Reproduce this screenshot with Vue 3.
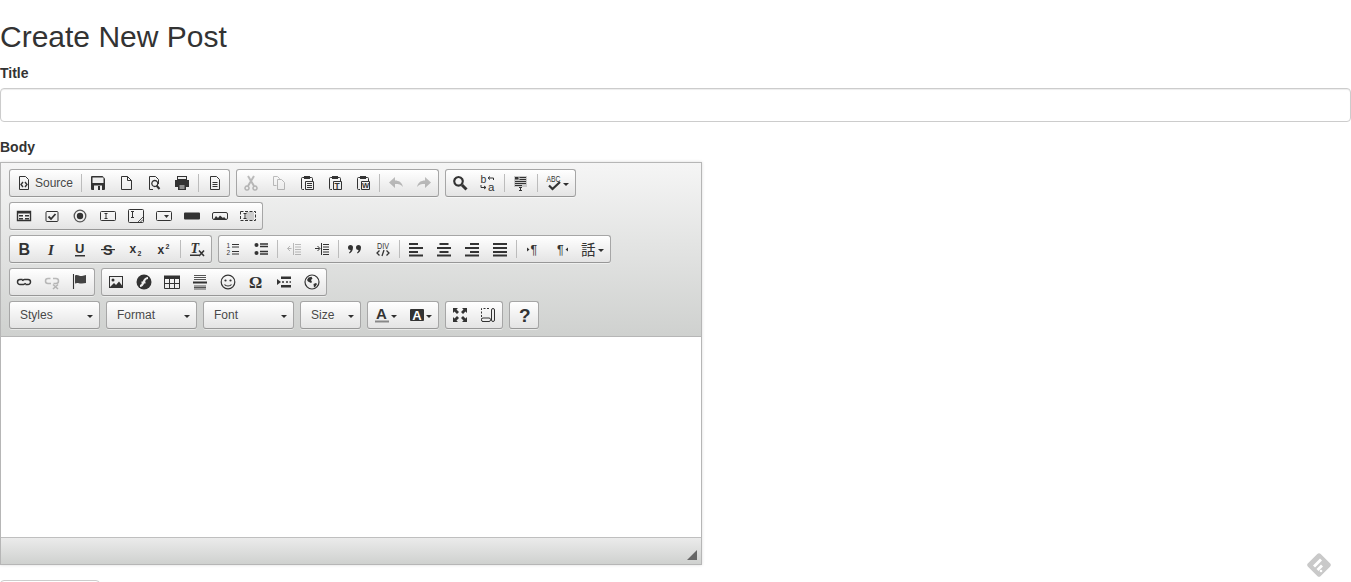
<script setup>
const D = '#333'
const txt = (s, x, y, size, extra = '') =>
  `<text x="${x}" y="${y}" font-size="${size}" font-family="Liberation Sans, sans-serif" fill="${D}" ${extra}>${s}</text>`
const line = (d, w = 1, c = D) => `<path d="${d}" fill="none" stroke="${c}" stroke-width="${w}"/>`
const fill = (d, c = D) => `<path d="${d}" fill="${c}"/>`
const doc = 'M3.500 1.500h6l3 3v10h-9z'
const clip = line('M5 2.500H3.500a1 1 0 0 0-1 1v10a1 1 0 0 0 1 1H5M11 2.500h1.500a1 1 0 0 1 1 1V6') + fill('M5 1h6v3H5z')
const sheet = line('M6.500 6.500h8v8h-8z')

const icons = {
  source: line(doc) + line('M7 7L5 9.500l2 2.500M9 7l2 2.500L9 12', 1.4),
  save: fill('M1.500 1h11L15 3.500V14a1 1 0 0 1-1 1H2a1 1 0 0 1-1-1V2z') + fill('M2.500 2.500h11V8h-11zM4 10.500h8V15H4z', '#eee') + fill('M8 11h2v4H8z'),
  newpage: line('M3.500 1.500h6l4 4v9h-10zM9.500 1.500v4h4'),
  preview: line('M12.500 9V4.500l-3-3h-6v13H7') + line('M8.800 5.500a3 3 0 1 0 .01 0z', 1.3) + line('M10.500 10.500L13.500 14', 2),
  print: fill('M3 1h10v4H3z') + fill('M4 2h8v2H4z', '#eee') + fill('M1 5h14v7h-3V9H4v3H1z') + fill('M4 9h8v6H4z') + fill('M5.500 10.500h5v1h-5zM5.500 12.500h5v1h-5z', '#eee'),
  templates: line('M3.500 1.500h6l3 3v10h-9z') + line('M5.500 7.500h5M5.500 9.500h5M5.500 11.500h5'),
  cut: line('M5 11L11 1M11 11L5 1', 2) + line('M4 11a2 2 0 1 0 .01 0zM12 11a2 2 0 1 0 .01 0z', 1.5),
  copy: line('M5.500 10.500h-3v-9h4l2 2v1') + line('M6.500 4.500h4l3 3v7h-7z'),
  paste: clip + sheet + line('M8 8.500h5M8 10.500h5M8 12.500h5'),
  pastetext: clip + sheet + txt('T', 7.500, 13.500, 8.500, 'font-weight="700"'),
  pasteword: clip + sheet + txt('W', 6.900, 13, 7.500, 'font-weight="700"'),
  undo: fill('M1 7.500L7 2v3.500c4 0 7 2 8 6.500-2-2.500-4-3-8-3v4z'),
  redo: fill('M15 7.500L9 2v3.500c-4 0-7 2-8 6.500 2-2.500 4-3 8-3v4z'),
  find: line('M6.500 2a4.300 4.300 0 1 0 .01 0z', 2.200) + line('M10 10l4.500 4.500', 3),
  replace: txt('b', 0.500, 8, 10.500) + txt('a', 8, 15.500, 11.500) + line('M9 3h4.500v2M8 3l2-1.500M8 3l2 1.500') + line('M1 10v2.500h5M6 12.500l-2-1.500M6 12.500L4 14'),
  selectall: fill('M1 1h13v11H1z', '#c8c8c8') + fill('M2 2h3.500v2.500H2z') + line('M6.500 2.500h6.500M6.500 4.500h6.500M2 6.500h11M2 8.500h11M2 10.500h7', 1.100) + line('M6 12.500h3M7.500 12.500v3M6 15.500h3'),
  spell: txt('ABC', 0.500, 7, 8.500, 'textLength="14" lengthAdjust="spacingAndGlyphs"') + line('M3 10.500l3.500 3.500 7.500-7', 2.200),
  form: line('M1.500 3.500h13v9h-13z', 1.400) + fill('M1.500 3.500h13v2h-13z') + fill('M3 7h4v1.500H3zM9 7h4v1.500H9zM3 10h4v1.500H3zM9 10h4v1.500H9z'),
  checkbox: line('M3 3.500h10a1 1 0 0 1 1 1v8a1 1 0 0 1-1 1H3a1 1 0 0 1-1-1v-8a1 1 0 0 1 1-1z') + line('M4.500 8.500l2.500 2.500 4.500-5', 1.800),
  radio: '<circle cx="8" cy="8" r="5.800" fill="none" stroke="#555" stroke-width="1.300"/><circle cx="8" cy="8" r="3.200" fill="#333"/>',
  textfield: line('M1.500 3.500h13a1 1 0 0 1 1 1v7a1 1 0 0 1-1 1h-13a1 1 0 0 1-1-1v-7a1 1 0 0 1 1-1z') + line('M4.500 5.500h3M6 5.500v5M4.500 10.500h3'),
  textarea: line('M.5 2.500a1 1 0 0 1 1-1h13a1 1 0 0 1 1 1v11a1 1 0 0 1-1 1h-13a1 1 0 0 1-1-1z') + line('M3 3.500h3M4.500 3.500v6M3 9.500h3') + line('M10 14l5-5M12.500 14l2.500-2.500', 1, '#555'),
  select: line('M1.500 3.500h13a1 1 0 0 1 1 1v7a1 1 0 0 1-1 1h-13a1 1 0 0 1-1-1v-7a1 1 0 0 1 1-1z') + fill('M8 7h5l-2.500 3z'),
  button: fill('M1 4.500h14a1 1 0 0 1 1 1v5a1 1 0 0 1-1 1H1a1 1 0 0 1-1-1v-5a1 1 0 0 1 1-1z'),
  imagebutton: line('M2 4.500h12a1.500 1.500 0 0 1 1.500 1.500v4a1.500 1.500 0 0 1-1.500 1.500H2a1.500 1.500 0 0 1-1.500-1.500V6A1.500 1.500 0 0 1 2 4.500z') + fill('M2 11l2-3 2 2 2-2.500 3 2.500 1-1 2 2z'),
  hiddenfield: fill('M6 4h8v8H6z', '#ccc') + '<rect x="0.500" y="3.500" width="15" height="9" fill="none" stroke="#333" stroke-dasharray="3 1.500"/>' + line('M3.500 5.500h3M5 5.500v5M3.500 10.500h3'),
  bold: txt('B', 2.500, 14, 16, 'font-weight="700"'),
  italic: `<text x="4" y="13.500" font-size="15" font-weight="700" font-style="italic" font-family="Liberation Serif, serif" fill="${D}">I</text>`,
  underline: txt('U', 3, 12, 13, 'font-weight="700"') + fill('M3 14h10v1.500H3z'),
  strike: txt('S', 3, 13.500, 14.500, 'font-weight="700"') + fill('M1 8h14v1.200H1z'),
  subscript: txt('x', 1.500, 12, 12, 'font-weight="700"') + txt('2', 9.500, 14.500, 7, 'font-weight="700"'),
  superscript: txt('x', 1.500, 13, 12, 'font-weight="700"') + txt('2', 9.500, 7.500, 7, 'font-weight="700"'),
  removeformat: `<text x="1.500" y="12" font-size="14" font-weight="700" font-style="italic" font-family="Liberation Serif, serif" fill="${D}">T</text>` + fill('M1 13.500h9V15H1z') + line('M10 9.500l5 5.500M15 9.500l-5 5.500', 1.600),
  numberedlist: txt('1', 1.500, 6.500, 6.500) + txt('2', 1.500, 14, 6.500) + line('M7 3.500h7M7 6h7M7 10.500h7M7 13h7'),
  bulletedlist: '<circle cx="3.500" cy="4" r="2" fill="#333"/><circle cx="3.500" cy="12" r="2" fill="#333"/>' + line('M7 3h8M7 5.500h8M7 10.500h8M7 13h8', 1.300),
  outdent: line('M4 5L1.500 7.500 4 10M1.500 7.500h4') + line('M7.500 2v12', 1, '#333') + line('M9 3.500h6M9 6h6M9 8.500h6M9 11h6M9 13.500h6'),
  indent: line('M3.500 5L6 7.500 3.500 10M1 7.500h4.500') + line('M7.500 2v12', 1, '#333') + line('M9 3.500h6M9 6h6M9 8.500h6M9 11h6M9 13.500h6'),
  blockquote: fill('M3.500 4a2.500 2.500 0 0 1 2.500 2.500c0 3-1.500 5-3.500 6l-.5-1c1-.8 1.500-1.500 1.500-2.500a2.500 2.500 0 0 1 0-5zM11.500 4a2.500 2.500 0 0 1 2.500 2.500c0 3-1.500 5-3.500 6l-.5-1c1-.8 1.500-1.500 1.500-2.500a2.500 2.500 0 0 1 0-5z'),
  creatediv: txt('DIV', 2, 7.500, 8.500, 'textLength="12" lengthAdjust="spacingAndGlyphs"') + line('M4.500 9.500L2 12l2.500 2.500M11.500 9.500L14 12l-2.500 2.500M9 9l-2 6', 1.300),
  left: line('M1 3h9M1 7h14M1 11h9M1 14.500h14', 2),
  center: line('M3.500 3h9M1 7h14M3.500 11h9M1 14.500h14', 2),
  right: line('M6 3h9M1 7h14M6 11h9M1 14.500h14', 2),
  justify: line('M1 3h14M1 7h14M1 11h14M1 14.500h14', 2),
  ltr: fill('M2 6.500l2.500 2-2.500 2z') + txt('¶', 5.500, 13, 12.500),
  rtl: fill('M15 6.500l-2.500 2 2.500 2z') + txt('¶', 4, 13, 12.500),
  language: `<text x="0" y="13.500" font-size="14.500" font-family="Noto Sans CJK JP, sans-serif" fill="${D}">話</text>`,
  link: line('M6.500 5.500H4a2.500 2.500 0 0 0 0 5h3.500a2.500 2.500 0 0 0 2-1.500M9.500 10.500H12a2.500 2.500 0 0 0 0-5H8.500a2.500 2.500 0 0 0-2 1.500', 1.500),
  unlink: line('M6.500 4.500H4a2.500 2.500 0 0 0 0 5h3M9.500 9.500H12a2.500 2.500 0 0 0 0-5H9', 1.500) + line('M9 10.500l5 4.500M14 10.500L9 15', 1.500),
  anchor: line('M1.500 0v15', 1.100) + fill('M3 1.500c3-1.500 4 1 7 .5l4-1v8l-4 .5c-3 .5-4-1.500-7 0z', '#444'),
  image: fill('M1 2h14v12H1z') + fill('M2 3h12v10H2z', '#f0f0f0') + '<circle cx="5" cy="6" r="1.500" fill="#333"/>' + fill('M2 13l4-4 2 2 3-3.500 3 4V13z'),
  flash: '<circle cx="8" cy="8" r="7.500" fill="#333"/>' + line('M4 12c3 0 3-3 4-5s2-3 4-3M5.500 8.500h4', 2, '#eee'),
  table: fill('M0 1.500h16V5H0z') + line('M.5 4.500h15v10H.5zM5.500 4.500v10M10.500 4.500v10M.5 9.500h15'),
  horizontalrule: line('M2 1.500h12M2 3.500h12M2 5.500h12M2 12h12M2 13.500h12M2 15h12', 1, '#555') + fill('M1 7.500h14v2H1z'),
  smiley: '<circle cx="8" cy="8" r="6.800" fill="none" stroke="#333" stroke-width="1.200"/><circle cx="5.500" cy="6.500" r="1.100" fill="#333"/><circle cx="10.500" cy="6.500" r="1.100" fill="#333"/>' + line('M4.500 10.500c1.500 2 5.500 2 7 0', 1.200),
  specialchar: `<text x="1" y="14" font-size="16.500" font-weight="700" font-family="Liberation Serif, serif" fill="${D}">Ω</text>`,
  pagebreak: fill('M1 5l4 3-4 3z') + fill('M5 2.500h10v2.500H5zM5 11h10v2.500H5z') + line('M6 8h2M10 8h2M13.500 8h1.500', 1.500),
  iframe: '<circle cx="8" cy="8" r="7" fill="none" stroke="#333" stroke-width="1.200"/>' + fill('M4.500 3.500l3-.8 1 1.800-1.500 1.500 1 2L7 9 4 7.500 3 6zM9.500 10l2.500-1 1 1-1.500 2.500-1.500 1z'),
  textcolor: txt('A', 2, 11.500, 15, 'font-weight="700"') + fill('M1 13.500h14v2H1z', '#888'),
  bgcolor: fill('M2 2h12a1 1 0 0 1 1 1v10a1 1 0 0 1-1 1H2a1 1 0 0 1-1-1V3a1 1 0 0 1 1-1z') + `<text x="3.300" y="12.500" font-size="13" font-weight="700" font-family="Liberation Sans, sans-serif" fill="#fff">A</text>`,
  maximize: fill('M1 1h5L4.500 2.500 7 5 5 7 2.500 4.500 1 6zM15 1v5l-1.500-1.500L11 7 9 5l2.500-2.500L10 1zM1 15v-5l1.500 1.500L5 9l2 2-2.500 2.500L6 15zM15 15h-5l1.500-1.500L9 11l2-2 2.500 2.500L15 10z'),
  showblocks: '<path d="M9 1.500H1.500v13H9" fill="none" stroke="#333" stroke-dasharray="2 1.500"/><rect x="1.500" y="11" width="9" height="3.500" rx="1.500" fill="#eee" stroke="#333"/><rect x="11.500" y="1.500" width="3" height="13" rx="1.500" fill="#eee" stroke="#333"/>',
  about: txt('?', 3, 15, 19, 'font-weight="700"'),
}

const sep = { sep: true }
const b = (icon, opts = {}) => ({ icon, ...opts })

const rows = [
  [
    [b('source', { label: 'Source' }), sep, b('save'), b('newpage'), b('preview'), b('print'), sep, b('templates')],
    [b('cut', { off: true }), b('copy', { off: true }), b('paste'), b('pastetext'), b('pasteword'), sep, b('undo', { off: true }), b('redo', { off: true })],
    [b('find'), b('replace'), sep, b('selectall'), sep, b('spell', { arrow: true })],
  ],
  [
    [b('form'), b('checkbox'), b('radio'), b('textfield'), b('textarea'), b('select'), b('button'), b('imagebutton'), b('hiddenfield')],
  ],
  [
    [b('bold'), b('italic'), b('underline'), b('strike'), b('subscript'), b('superscript'), sep, b('removeformat')],
    [b('numberedlist'), b('bulletedlist'), sep, b('outdent', { off: true }), b('indent'), sep, b('blockquote'), b('creatediv'), sep, b('left'), b('center'), b('right'), b('justify'), sep, b('ltr'), b('rtl'), b('language', { arrow: true })],
  ],
  [
    [b('link'), b('unlink', { off: true }), b('anchor')],
    [b('image'), b('flash'), b('table'), b('horizontalrule'), b('smiley'), b('specialchar'), b('pagebreak'), b('iframe')],
  ],
]

const combos = [
  { name: 'Styles', w: 91 },
  { name: 'Format', w: 91 },
  { name: 'Font', w: 91 },
  { name: 'Size', w: 61 },
]
const lastGroups = [
  [b('textcolor', { arrow: true }), b('bgcolor', { arrow: true })],
  [b('maximize'), b('showblocks')],
  [b('about')],
]
</script>

<template>
  <div class="page">
    <h2>Create New Post</h2>
    <div class="field">
      <label for="title">Title</label>
      <input id="title" type="text" class="control">
    </div>
    <div class="field">
      <label>Body</label>
      <div class="editor">
        <div class="top">
          <div v-for="(row, i) in rows" :key="i" class="row">
            <div v-for="(group, j) in row" :key="j" class="group">
              <template v-for="(item, k) in group" :key="k">
                <span v-if="item.sep" class="sep"></span>
                <a v-else class="btn" :class="{ off: item.off }">
                  <svg class="icon" width="16" height="16" viewBox="0 0 16 16" v-html="icons[item.icon]"></svg>
                  <span v-if="item.label" class="btn-label">{{ item.label }}</span>
                  <span v-if="item.arrow" class="btn-arrow"></span>
                </a>
              </template>
            </div>
          </div>
          <div class="row">
            <a v-for="c in combos" :key="c.name" class="group combo" :style="{ width: c.w + 'px' }">
              <span>{{ c.name }}</span>
              <span class="combo-arrow"></span>
            </a>
            <div v-for="(group, j) in lastGroups" :key="j" class="group">
              <a v-for="item in group" :key="item.icon" class="btn">
                <svg class="icon" width="16" height="16" viewBox="0 0 16 16" v-html="icons[item.icon]"></svg>
                <span v-if="item.arrow" class="btn-arrow"></span>
              </a>
            </div>
          </div>
        </div>
        <div class="content"></div>
        <div class="bottom">
          <span class="resizer"></span>
        </div>
      </div>
    </div>
    <button class="submit">Create Post</button>
    <svg class="float-icon" width="24" height="24" viewBox="0 0 24 24">
      <path d="M10.300 1L1 10.300a2.400 2.400 0 0 0 0 3.400L10.300 23a2.400 2.400 0 0 0 3.400 0L23 13.700a2.400 2.400 0 0 0 0-3.400L13.700 1a2.400 2.400 0 0 0-3.400 0z" fill="#c9c9c9"/>
      <path d="M6 12.500l7-7 2 2-7 7zM9.500 16l4.500-4.500 2 2-4.500 4.500z" fill="#fff"/>
      <circle cx="14" cy="18" r="1.300" fill="#fff"/>
    </svg>
  </div>
</template>

<style>
html, body {
  overflow: hidden;
}
</style>

<style scoped>
.page {
  font-family: "Liberation Sans", Arial, sans-serif;
  font-size: 14px;
  line-height: 20px;
  color: #333;
}

h2 {
  margin: 20px 0 10px;
  font-size: 30px;
  line-height: 33px;
  font-weight: 500;
}

.field {
  margin-bottom: 15px;
}

label {
  display: block;
  margin-bottom: 5px;
  font-weight: 700;
}

.control {
  display: block;
  box-sizing: border-box;
  width: 100%;
  height: 34px;
  padding: 6px 12px;
  border: 1px solid #ccc;
  border-radius: 4px;
  box-shadow: inset 0 1px 1px rgba(0, 0, 0, 0.075);
  background: #fff;
}

.editor {
  position: relative;
  box-sizing: border-box;
  width: 702px;
  border: 1px solid #b6b6b6;
  box-shadow: 0 0 3px rgba(0, 0, 0, 0.15);
}

.top {
  box-sizing: border-box;
  height: 174px;
  padding: 6px 8px 2px;
  border-bottom: 1px solid #b6b6b6;
  background: linear-gradient(#f5f5f5, #cfd1cf);
}

.row {
  display: flex;
  gap: 6px;
  margin-bottom: 5px;
}

.group {
  display: flex;
  align-items: center;
  box-sizing: border-box;
  height: 28px;
  border: 1px solid #a6a6a6;
  border-bottom-color: #979797;
  border-radius: 3px;
  background: linear-gradient(#fff, #e4e4e4);
  box-shadow: 0 1px 0 rgba(255, 255, 255, 0.5);
}

.sep {
  flex: none;
  width: 1px;
  height: 18px;
  margin: 0 2px;
  background: #bcbcbc;
}

.btn {
  display: flex;
  align-items: center;
  flex: none;
  box-sizing: border-box;
  height: 26px;
  padding: 0 6px;
}

.icon {
  overflow: visible;
}

.btn.off svg {
  opacity: 0.3;
}

.btn-label {
  margin-left: 3px;
  font-size: 12px;
  color: #474747;
  text-shadow: 0 1px 0 rgba(255, 255, 255, 0.5);
}

.btn-arrow {
  width: 0;
  height: 0;
  margin: 2px 0 0 1px;
  border-top: 3px solid #2f2f2f;
  border-left: 3px solid transparent;
  border-right: 3px solid transparent;
}

.combo {
  justify-content: space-between;
  padding: 0 6px 0 10px;
  font-size: 12px;
  color: #484848;
  text-shadow: 0 1px 0 rgba(255, 255, 255, 0.5);
}

.combo-arrow {
  width: 0;
  height: 0;
  margin-top: 2px;
  border-top: 3px solid #2f2f2f;
  border-left: 3px solid transparent;
  border-right: 3px solid transparent;
}

.content {
  height: 200px;
  background: #fff;
}

.bottom {
  position: relative;
  box-sizing: border-box;
  height: 27px;
  border-top: 1px solid #bfbfbf;
  background: linear-gradient(#ebebeb, #cfd1cf);
}

.resizer {
  position: absolute;
  right: 4px;
  bottom: 4px;
  width: 0;
  height: 0;
  border-bottom: 10px solid #666;
  border-left: 10px solid transparent;
}

.submit {
  display: block;
  width: 100px;
  height: 34px;
  padding: 6px 12px;
  border: 1px solid #ccc;
  border-radius: 4px;
  background: #fff;
  color: #333;
  font: inherit;
}

.float-icon {
  position: fixed;
  right: 20px;
  bottom: 5px;
}
</style>
